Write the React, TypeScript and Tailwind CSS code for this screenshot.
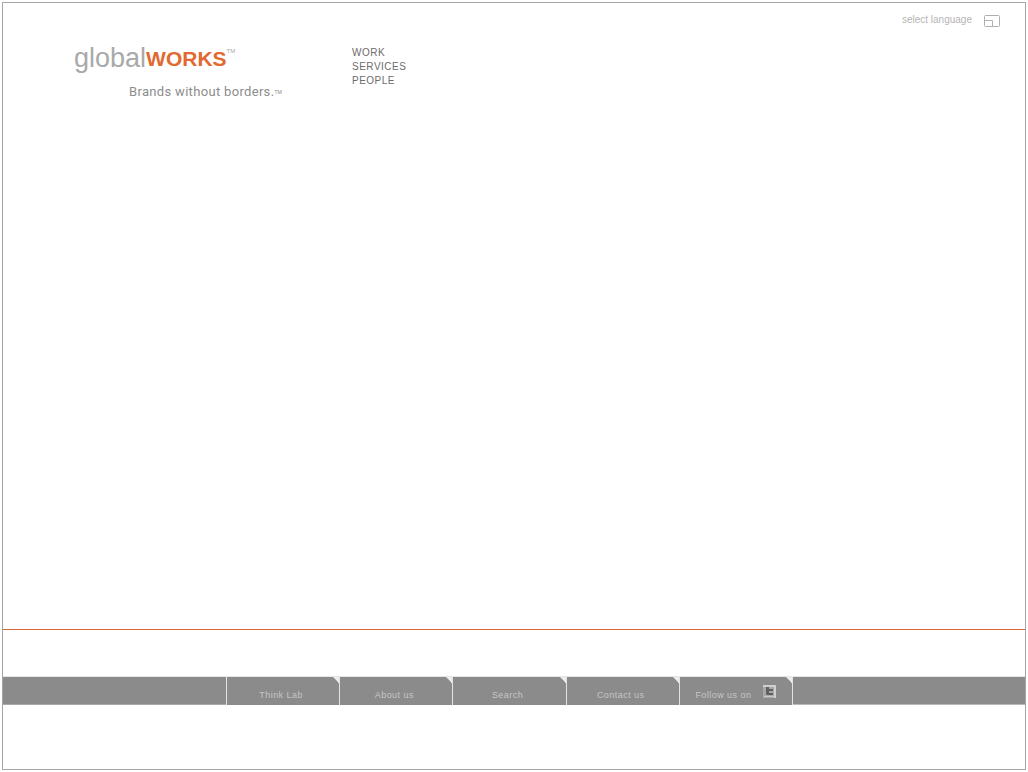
import React from "react";

const tabs = ["Think Lab", "About us", "Search", "Contact us"];

function Fold() {
  return (
    <svg className="absolute top-0 right-0 h-[6px] w-[6px]" viewBox="0 0 6 6" aria-hidden="true">
      <path d="M0 0H6V6H5V5L1 1Z" fill="#ededed" />
    </svg>
  );
}

const tabClass =
  "relative flex h-7 items-center justify-center bg-[#8b8b8b] pt-2 pr-1 text-[9px] leading-3 tracking-wider text-[#c6c6c6]";

export default function App() {
  return (
    <div className="flex min-h-screen bg-white p-[2px] font-['Liberation_Sans',Arial,sans-serif]">
      <div className="flex flex-1 flex-col border border-[#a5a5a5]">
        <header className="flex flex-1 items-start">
          <div className="ml-[71px] w-[278px] pt-[39px]">
            <h1 className="flex items-start text-[27px] leading-8 text-[#a9a9a9]">
              <span>global</span>
              <span className="text-[21px] leading-[34px] font-bold text-[#e2692f]">WORKS</span>
              <span className="pt-[5px] text-[6px] leading-[8px]">TM</span>
            </h1>
            <p className="mt-2 ml-[55px] flex items-center font-['Roboto',sans-serif] text-[13px] leading-4 tracking-wide text-[#8d8d8d]">
              Brands without borders.
              <span className="text-[5px] tracking-normal">TM</span>
            </p>
          </div>
          <nav className="flex flex-col pt-[43px] text-[10px] leading-[14px] tracking-wider text-[#6b6b6b]">
            <a href="#work">WORK</a>
            <a href="#services">SERVICES</a>
            <a href="#people">PEOPLE</a>
          </nav>
          <button type="button" className="mt-[10px] mr-[25px] ml-auto flex items-start gap-3 text-[10px] leading-[14px] text-[#b5b5b5]">
            select language
            <svg className="mt-[2px] h-3 w-4" viewBox="0 0 16 12" fill="none" stroke="#b0b0b0" aria-hidden="true">
              <rect x=".5" y=".5" width="15" height="11" rx="1" />
              <path d="M.5 5.5H8.5V11.5" />
            </svg>
          </button>
        </header>
        <div className="border-t border-[#d9673a] pt-[46px] pb-16">
          <nav className="flex border-t border-[#e6e6e6]">
            <div className="h-7 w-[223px] border-b border-[#a9a9a9] bg-[#8b8b8b]" />
            <div className="grid w-[567px] grid-cols-5 gap-px bg-[#e3e3e3] px-px">
              {tabs.map((label) => (
                <a key={label} href="#" className={tabClass}>
                  {label}
                  <Fold />
                </a>
              ))}
              <a href="#follow" className={tabClass}>
                <span className="mr-3">Follow us on</span>
                <svg className="-mr-1 mb-2 h-[13px] w-[13px]" viewBox="0 0 13 13" aria-hidden="true">
                  <rect width="13" height="13" fill="#a8a8a8" />
                  <path d="M0 0H13V13H11V2H0Z" fill="#cfcfcf" />
                  <path d="M3 2H6V4H10V6H6V8H10V10H4L3 9Z" fill="#606060" />
                  <path d="M1 11H12V12H1Z" fill="#c8c8c8" />
                </svg>
                <Fold />
              </a>
            </div>
            <div className="h-7 flex-1 border-b border-[#b9b9b9] bg-[#8b8b8b]" />
          </nav>
        </div>
      </div>
    </div>
  );
}
